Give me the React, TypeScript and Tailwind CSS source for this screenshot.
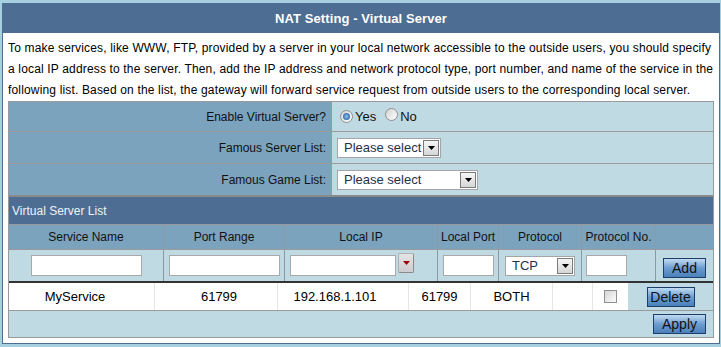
import React from 'react';

function Arrow({ color = '#000' }: { color?: string }) {
  return (
    <svg width="7" height="4" viewBox="0 0 7 4">
      <path d="M0 0h7L3.5 4z" fill={color} />
    </svg>
  );
}

function FakeSelect({ w, label }: { w: string; label: string }) {
  return (
    <div className={`flex h-[20px] ${w} items-stretch border border-[#a5a5a5] bg-white`}>
      <span className="flex-1 whitespace-nowrap pl-[6px] text-[13px] leading-[18px] text-[#23324f]">{label}</span>
      <span className="my-[1px] mr-[1px] flex w-[16px] shrink-0 items-center justify-center border border-[#7a7a7a] bg-linear-to-b from-[#f6f6f6] to-[#d6d6d6]">
        <Arrow />
      </span>
    </div>
  );
}

function Radio({ on }: { on?: boolean }) {
  return (
    <span className="inline-flex h-[13px] w-[13px] items-center justify-center rounded-full border border-[#8f8f8f] bg-linear-to-br from-[#d4d4d4] to-[#ffffff]">
      {on && <span className="h-[7px] w-[7px] rounded-full bg-radial from-[#8cc0f0] to-[#1c4f92]" />}
    </span>
  );
}

function Field({ w }: { w: string }) {
  return <div className={`h-[21px] ${w} border border-[#a9a9a9] bg-white`} />;
}

function Btn({ w, children }: { w: string; children: React.ReactNode }) {
  return (
    <div className={`flex h-[20px] ${w} items-center justify-center border border-[#1f3d6a] bg-linear-to-b from-[#c2dbf1] via-[#6c9dd0] to-[#4a80b9] text-[14px] leading-none text-[#111]`}>
      {children}
    </div>
  );
}

export default function App() {
  return (
    <div className="h-[347px] w-[721px] overflow-hidden bg-[#a6cfe0] pl-[2px] pt-[3px] font-['Liberation_Sans',Arial,sans-serif] text-[12px] text-[#111]">
      <div className="flex h-[341px] w-[718px] flex-col border border-[#4e6d93] bg-white">
        {/* Title */}
        <div className="flex h-[29px] shrink-0 items-center justify-center bg-[#4e6d93] text-[13px] font-bold tracking-[0.1px] text-white">
          NAT Setting - Virtual Server
        </div>

        <div className="px-[5px] pt-[5px]">
          <p className="whitespace-nowrap text-[12px] leading-[21px] tracking-[0.16px] text-black">
            To make services, like WWW, FTP, provided by a server in your local network accessible to the outside users, you should specify
            <br />
            a local IP address to the server. Then, add the IP address and network protocol type, port number, and name of the service in the
            <br />
            following list. Based on the list, the gateway will forward service request from outside users to the corresponding local server.
          </p>

          <div className="w-[706px] border border-[#9a9a9a]">
            {/* Settings rows */}
            <div className="flex h-[30px] border-b border-[#9a9a9a]">
              <div className="flex w-[323px] items-center justify-end border-r border-[#9a9a9a] bg-[#7ca3bd] pr-[5px]">
                Enable Virtual Server?
              </div>
              <div className="flex flex-1 items-center bg-[#c0dae3] pl-[8px]">
                <Radio on />
                <span className="ml-[2px] text-[13px]">Yes</span>
                <span className="ml-[9px]"><Radio /></span>
                <span className="ml-[2px] text-[13px]">No</span>
              </div>
            </div>
            <div className="flex h-[32px] border-b border-[#9a9a9a]">
              <div className="flex w-[323px] items-center justify-end border-r border-[#9a9a9a] bg-[#7ca3bd] pr-[5px]">
                Famous Server List:
              </div>
              <div className="flex flex-1 items-center bg-[#c0dae3] pl-[5px]">
                <FakeSelect w="w-[104px]" label="Please select" />
              </div>
            </div>
            <div className="flex h-[33px] border-b-2 border-[#8a8a8a]">
              <div className="flex w-[323px] items-center justify-end border-r border-[#9a9a9a] bg-[#7ca3bd] pr-[5px]">
                Famous Game List:
              </div>
              <div className="flex flex-1 items-center bg-[#c0dae3] pl-[5px]">
                <FakeSelect w="w-[141px]" label="Please select" />
              </div>
            </div>

            {/* List header */}
            <div className="flex h-[28px] items-center border-b border-[#9a9a9a] bg-[#4e6d93] pl-[3px] text-[#eef2f7]">
              Virtual Server List
            </div>

            {/* Column titles */}
            <div className="grid h-[25px] grid-cols-[155px_121px_153px_61px_83px_74px_57px] border-b border-[#9a9a9a] bg-[#7ca3bd]">
              <div className="flex items-center justify-center border-r border-[#8c9aa6]">Service Name</div>
              <div className="flex items-center justify-center border-r border-[#8c9aa6]">Port Range</div>
              <div className="flex items-center justify-center border-r border-[#8c9aa6]">Local IP</div>
              <div className="flex items-center justify-center whitespace-nowrap border-r border-[#8c9aa6]">Local Port</div>
              <div className="flex items-center justify-center border-r border-[#8c9aa6]">Protocol</div>
              <div className="flex items-center justify-center whitespace-nowrap border-r border-[#8c9aa6]">Protocol No.</div>
              <div />
            </div>

            {/* Input row */}
            <div className="grid h-[33px] grid-cols-[155px_121px_153px_61px_83px_74px_57px] border-b-2 border-[#333] bg-[#c0dae3]">
              <div className="flex items-center justify-center border-r border-[#8c9aa6]">
                <Field w="w-[111px]" />
              </div>
              <div className="flex items-center justify-center border-r border-[#8c9aa6]">
                <Field w="w-[111px]" />
              </div>
              <div className="flex items-start border-r border-[#8c9aa6] pl-[5px]">
                <div className="mt-[5px]">
                  <Field w="w-[106px]" />
                </div>
                <div className="ml-[2px] mt-[3px] flex h-[20px] w-[16px] items-center justify-center rounded-[2px] border border-[#b0b0b0] border-b-[#8a8a8a] border-r-[#8a8a8a] bg-linear-to-b from-[#e4e4e4] to-[#cdcdcd]">
                  <Arrow color="#a50000" />
                </div>
              </div>
              <div className="flex items-center justify-center border-r border-[#8c9aa6]">
                <Field w="w-[51px]" />
              </div>
              <div className="flex items-center justify-center border-r border-[#8c9aa6]">
                <FakeSelect w="w-[70px]" label="TCP" />
              </div>
              <div className="flex items-center border-r border-[#8c9aa6] pl-[4px]">
                <Field w="w-[41px]" />
              </div>
              <div className="flex items-start justify-center pt-[8px]">
                <Btn w="w-[43px]">Add</Btn>
              </div>
            </div>

            {/* Data row */}
            <div className="grid h-[28px] grid-cols-[146px_123px_131px_62px_82px_40px_35px_85px] border-b border-[#9a9a9a] bg-white text-[13px] text-black">
              <div className="flex items-center justify-center border-r border-[#e6e6e6] pr-[13px]">MyService</div>
              <div className="flex items-center justify-center border-r border-[#e6e6e6] pl-[6px]">61799</div>
              <div className="flex items-center justify-center border-r border-[#e6e6e6] pr-[16px]">192.168.1.101</div>
              <div className="flex items-center justify-center border-r border-[#e6e6e6]">61799</div>
              <div className="flex items-center justify-center border-r border-[#e6e6e6]">BOTH</div>
              <div className="border-r border-[#e6e6e6]" />
              <div className="flex items-center justify-center">
                <span className="h-[13px] w-[13px] border border-[#8f8f8f] bg-linear-to-br from-[#d6d6d6] to-[#fbfbfb]" />
              </div>
              <div className="flex items-center justify-center bg-[#c0dae3]">
                <Btn w="w-[48px]">Delete</Btn>
              </div>
            </div>

            {/* Apply row */}
            <div className="flex h-[26px] items-center justify-end bg-[#c0dae3] pr-[7px]">
              <Btn w="w-[53px]">Apply</Btn>
            </div>
          </div>
        </div>
      </div>
    </div>
  );
}
